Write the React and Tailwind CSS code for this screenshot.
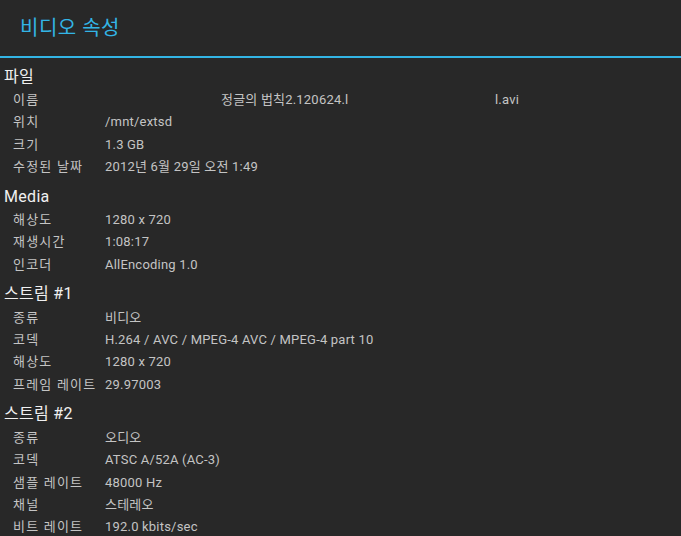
const sections = [
  {
    title: "파일",
    rows: [
      ["이름", "__name__"],
      ["위치", "/mnt/extsd"],
      ["크기", "1.3 GB"],
      ["수정된 날짜", "2012년 6월 29일 오전 1:49"],
    ],
  },
  {
    title: "Media",
    rows: [
      ["해상도", "1280 x 720"],
      ["재생시간", "1:08:17"],
      ["인코더", "AllEncoding 1.0"],
    ],
  },
  {
    title: "스트림 #1",
    rows: [
      ["종류", "비디오"],
      ["코덱", "H.264 / AVC / MPEG-4 AVC / MPEG-4 part 10"],
      ["해상도", "1280 x 720"],
      ["프레임 레이트", "29.97003"],
    ],
  },
  {
    title: "스트림 #2",
    rows: [
      ["종류", "오디오"],
      ["코덱", "ATSC A/52A (AC-3)"],
      ["샘플 레이트", "48000 Hz"],
      ["채널", "스테레오"],
      ["비트 레이트", "192.0 kbits/sec"],
    ],
  },
];

export default function App() {
  return (
    <div
      className="w-[681px] h-[536px] overflow-hidden bg-[#282828] flex flex-col"
      style={{ fontFamily: "Roboto, 'Noto Sans CJK KR', sans-serif" }}
    >
      <div className="h-14 shrink-0 flex items-center pl-5">
        <span className="text-[20px] tracking-[0.5px] text-[#33b5e5] leading-none">비디오 속성</span>
      </div>
      <div className="h-[2px] shrink-0 bg-[#33b5e5]" />
      <div className="flex flex-col">
        {sections.map((s) => (
          <div key={s.title} className="flex flex-col">
            <div className="mt-[6.5px] h-6 flex items-center pl-1 text-[16px] tracking-[0.3px] text-[#f0f0f0]">
              {s.title}
            </div>
            {s.rows.map(([k, v]) => (
              <div key={k} className="h-[22.4px] flex items-center text-[13px] text-[#c4c4c4]">
                <div className="w-[105px] pl-[13px] shrink-0 whitespace-nowrap tracking-[1.2px]">{k}</div>
                <div className="whitespace-nowrap tracking-[0.2px]">
                  {v === "__name__" ? (
                    <>
                      <span className="inline-block w-[390px] pl-[116px]">정글의 법칙2.120624.l</span>
                      <span>l.avi</span>
                    </>
                  ) : (
                    v
                  )}
                </div>
              </div>
            ))}
          </div>
        ))}
      </div>
    </div>
  );
}
